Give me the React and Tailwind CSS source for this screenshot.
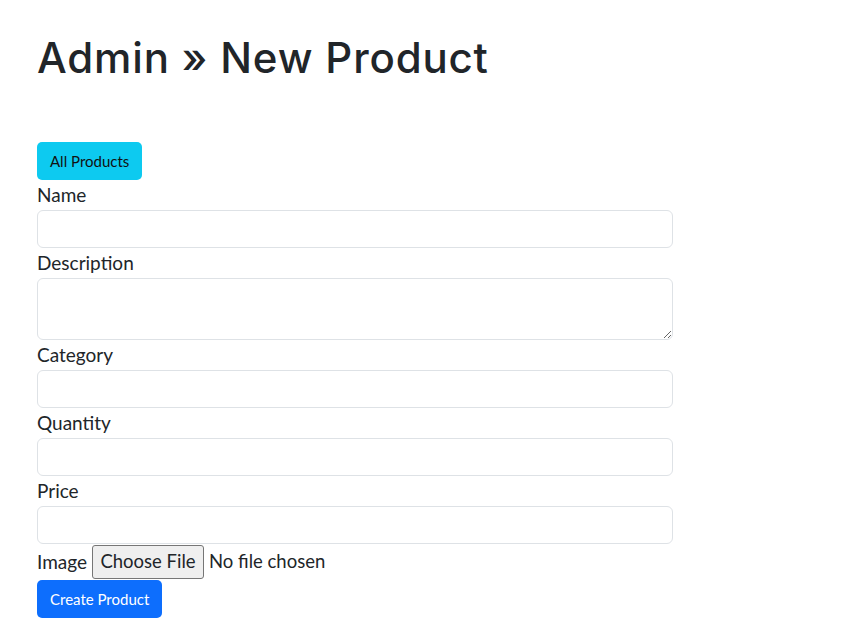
export default function App() {
  const label = "block text-[19px] leading-[30px] text-[#212529]";
  const input =
    "block h-[38px] w-full rounded-[6px] border border-[#dee2e6] bg-white px-3 text-base";

  return (
    <div className="min-h-screen bg-white px-[37px] pt-[34px] font-['Lato',sans-serif] text-[#212529]">
      <h1 className="font-['Inter',sans-serif] text-[42px] font-medium leading-[48px] tracking-[0.02em] text-[#212529]">
        Admin » New Product
      </h1>

      <div className="mt-[60px] w-[636px]">
        <button className="h-[38px] rounded-[5px] bg-[#0dcaf0] px-[13px] text-[15px] text-[#111]">
          All Products
        </button>

        <form className="flex flex-col">
          <label className={label}>Name</label>
          <input className={input} type="text" />

          <label className={label}>Description</label>
          <textarea className="block h-[62px] w-full rounded-[6px] border border-[#dee2e6] bg-white px-3 py-1.5 text-base" />

          <label className={label}>Category</label>
          <input className={input} type="text" />

          <label className={label}>Quantity</label>
          <input className={input} type="text" />

          <label className={label}>Price</label>
          <input className={input} type="text" />

          <div className="flex h-[36px] items-center text-[18.5px]">
            <span className="text-[19px]">Image</span>
            <span className="ml-[5px] flex h-[34px] w-[112px] items-center justify-center rounded-[3px] border border-[#767676] bg-[#efefef]">
              Choose File
            </span>
            <span className="ml-[5px]">No file chosen</span>
          </div>

          <div>
            <button
              type="button"
              className="h-[38px] rounded-[5px] bg-[#0d6efd] px-[13px] text-[15px] text-white"
            >
              Create Product
            </button>
          </div>
        </form>
      </div>
    </div>
  );
}
